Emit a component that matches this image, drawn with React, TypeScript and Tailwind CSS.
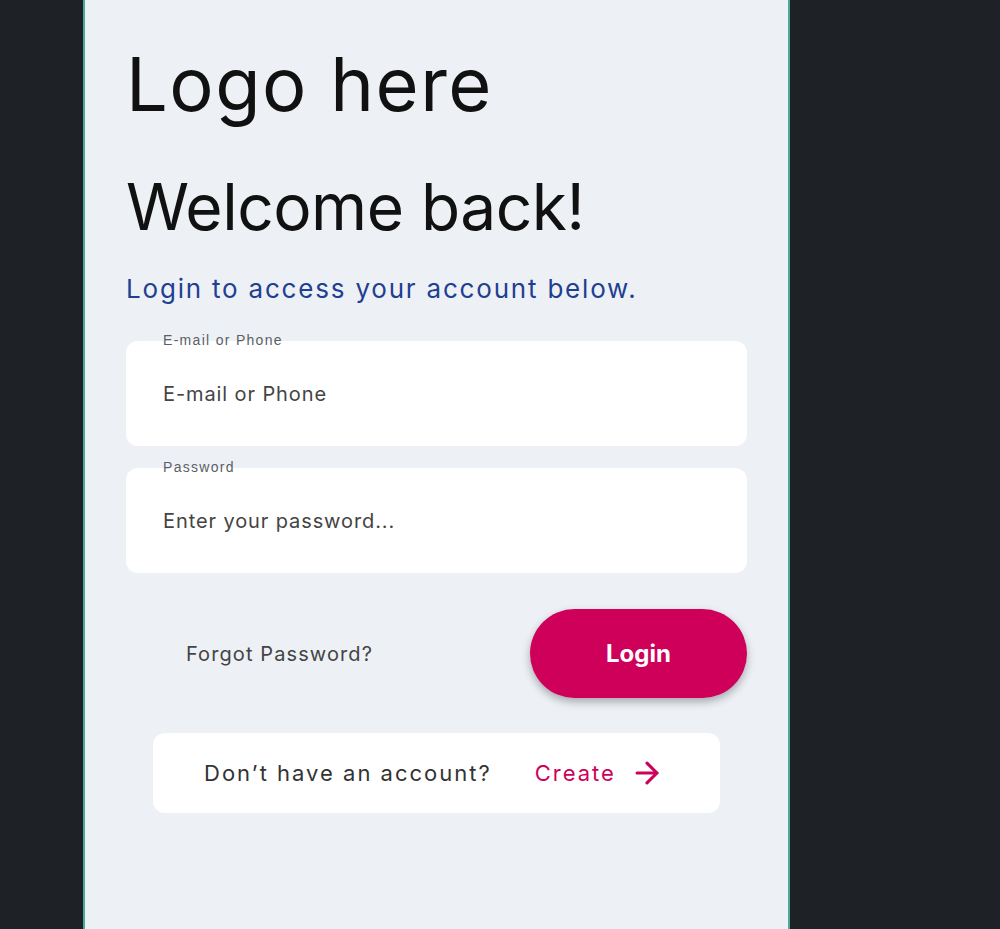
import { ArrowRight } from 'lucide-react';

function Field({ label, placeholder, type = 'text' }: { label: string; placeholder: string; type?: string }) {
  return (
    <div className="relative">
      <span className="absolute left-[37px] -top-[9px] z-10 text-[14px] leading-4 tracking-[1.3px] text-[#5b5f66] font-['Liberation_Sans',sans-serif]">
        {label}
      </span>
      <input
        type={type}
        placeholder={placeholder}
        className="block w-full h-[105px] rounded-[12px] bg-white pl-[37px] pr-4 text-[20px] tracking-[0.9px] text-[#333] placeholder:text-[#444] outline-none font-['Inter',sans-serif]"
      />
    </div>
  );
}

export default function App() {
  return (
    <div className="min-h-screen bg-[#1e2227] font-['Inter',sans-serif]">
      <div className="ml-[83px] w-[707px] min-h-screen border-x-2 border-[#4aa89c] bg-[#edf1f6] px-[41px] pt-[47px]">
        <h1 className="text-[74px] leading-none tracking-[1.5px] text-[#111]">Logo here</h1>

        <h2 className="mt-[54px] text-[64px] leading-none tracking-[-0.5px] text-[#111]">Welcome back!</h2>

        <p className="mt-[34px] text-[26px] leading-8 tracking-[1.8px] text-[#1f3f91]">Login to access your account below.</p>

        <form className="mt-[36px] flex flex-col gap-[22px]" onSubmit={(e) => e.preventDefault()}>
          <Field label="E-mail or Phone" placeholder="E-mail or Phone" />
          <Field label="Password" placeholder="Enter your password..." type="password" />
        </form>

        <div className="mt-[36px] flex items-center justify-between">
          <a href="#" className="pl-[60px] text-[20px] tracking-[1.1px] text-[#444]">Forgot Password?</a>
          <button className="w-[217px] h-[89px] rounded-full bg-[#cf0059] text-white text-[24px] font-bold shadow-[0_4px_8px_rgba(0,0,0,0.3)]">
            Login
          </button>
        </div>

        <div className="mt-[35px] mx-[27px] h-[80px] rounded-[12px] bg-white flex items-center pl-[51px]">
          <span className="text-[22px] tracking-[2px] text-[#333]">Don’t have an account?</span>
          <a href="#" className="ml-[43px] flex items-center gap-[14px] text-[22px] tracking-[2px] text-[#cf0059]">
            Create
            <ArrowRight className="w-[34px] h-[34px]" strokeWidth={2.2} aria-hidden="true" />
          </a>
        </div>
      </div>
    </div>
  );
}
